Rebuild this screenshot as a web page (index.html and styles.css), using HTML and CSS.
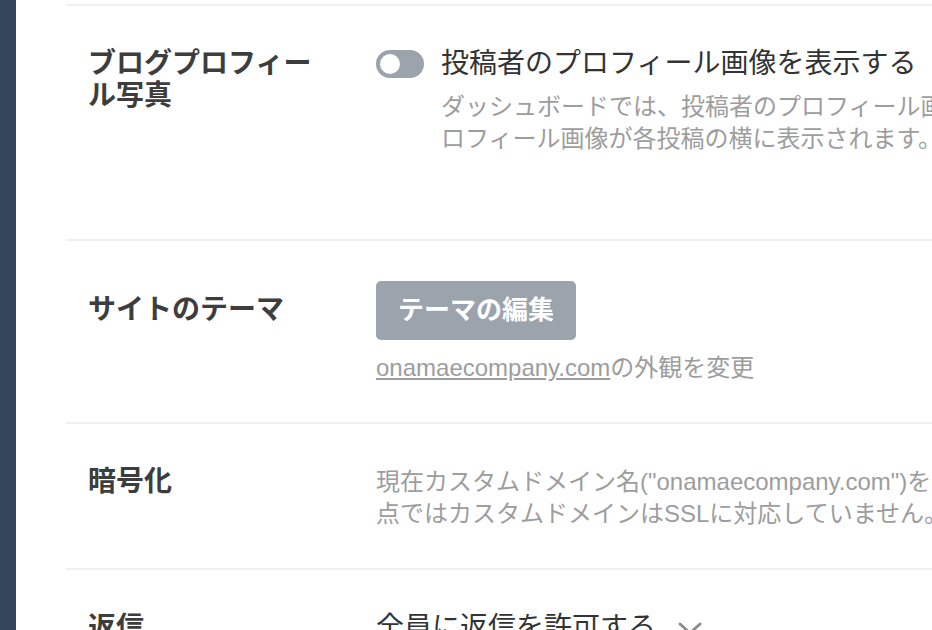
FILE: index.html
```html
<!DOCTYPE html>
<html lang="ja">
<head>
  <meta charset="UTF-8">
  <meta name="viewport" content="width=device-width, initial-scale=1.0">
  <title>ブログ設定</title>
  <link rel="stylesheet" href="styles.css">
</head>
<body>
  <div class="sidebar"></div>
  <div class="main">
    <div class="settings">

      <div class="row">
        <div class="row-label">ブログプロフィール写真</div>
        <div class="row-control">
          <label class="toggle-line">
            <span class="toggle"><span class="knob"></span></span>
            <span class="toggle-title">投稿者のプロフィール画像を表示する</span>
          </label>
          <p class="desc toggle-desc">ダッシュボードでは、投稿者のプロフィール画像が表示され、プロフィール画像が各投稿の横に表示されます。</p>
        </div>
      </div>

      <div class="row">
        <div class="row-label label-btn">サイトのテーマ</div>
        <div class="row-control">
          <button type="button" class="btn">テーマの編集</button>
          <p class="sub-link"><a href="#">onamaecompany.com</a>の外観を変更</p>
        </div>
      </div>

      <div class="row">
        <div class="row-label">暗号化</div>
        <div class="row-control">
          <p class="desc">現在カスタムドメイン名("onamaecompany.com")を使用中です。現時点ではカスタムドメインはSSLに対応していません。</p>
        </div>
      </div>

      <div class="row">
        <div class="row-label">返信</div>
        <div class="row-control">
          <div class="select">
            全員に返信を許可する
            <svg class="chev" width="24" height="14" viewBox="0 0 24 14"><path d="M2 2 L12 11 L22 2" fill="none" stroke="#8c8c8c" stroke-width="3" stroke-linecap="round" stroke-linejoin="round"/></svg>
          </div>
        </div>
      </div>

    </div>
  </div>
</body>
</html>
```

FILE: styles.css
```css
html, body { margin: 0; overflow: hidden; background: #fff; }
body { display: flex; font-family: "Liberation Sans", "Noto Sans CJK JP", sans-serif; color: #333; min-height: 100vh; }
.sidebar { width: 16px; flex: none; background-color: #34465c; min-height: 100vh; }
.main { flex: none; margin-left: 50px; padding-top: 4px; }
.settings { width: 1100px; }
.row { display: flex; padding: 42px 22px 38px; border-top: 2px solid #f0f0f0; }
.row-label { width: 240px; flex: none; margin-right: 48px; font-size: 28px; line-height: 32px; font-weight: 700; color: #3d3d3d; }
.label-btn { margin-top: 11px; }
.row-control { width: 768px; flex: none; }
p { margin: 0; }
.toggle-line { display: flex; align-items: center; gap: 17px; }
.toggle { position: relative; width: 48px; height: 28px; border-radius: 14px; background-color: #9ba3ad; flex: none; }
.knob { position: absolute; left: 4px; top: 4px; width: 20px; height: 20px; border-radius: 50%; background: #fff; }
.toggle-title { font-size: 28px; line-height: 32px; color: #333; }
.desc { font-size: 24px; line-height: 32px; color: #9d9d9d; }
.toggle-desc { margin: 11px 0 46px; padding-left: 65px; }
.btn { display: block; margin-top: -2px; border: none; border-radius: 5px; background-color: #9ba3ad; color: #fff; font-family: inherit; font-size: 26px; font-weight: 700; line-height: 35px; padding: 12px 22px; cursor: pointer; }
.sub-link { margin-top: 12px; font-size: 24px; line-height: 32px; color: #9d9d9d; }
.sub-link a { color: #9d9d9d; text-decoration: underline; }
.select { display: flex; align-items: center; font-size: 28px; line-height: 32px; color: #333; }
.chev { margin-left: 22px; margin-top: 2px; }
```
